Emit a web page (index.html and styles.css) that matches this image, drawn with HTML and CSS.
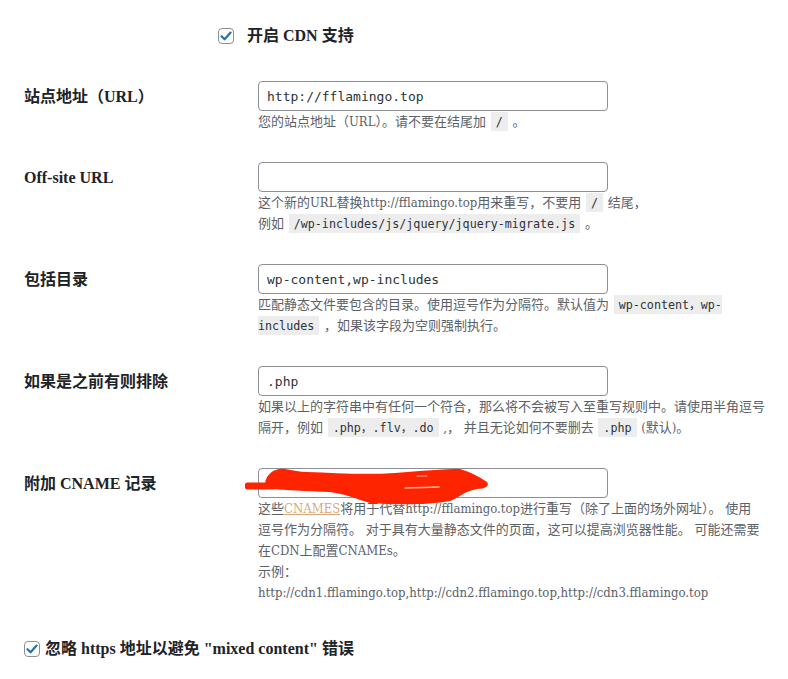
FILE: index.html
```html
<!DOCTYPE html>
<html lang="zh-CN">
<head>
    <meta charset="UTF-8">
    <meta name="viewport" content="width=device-width, initial-scale=1.0">
    <title>CDN 设置</title>
    <link rel="stylesheet" href="styles.css">
</head>
<body>
    <div class="wrap">
        <label class="option top-option">
            <span class="checkbox">
                <svg width="16" height="16" viewBox="0 0 16 16"><polyline points="3.5,8.2 6.6,11.3 12.6,4.6" fill="none" stroke="#2271b1" stroke-width="2.2" stroke-linecap="round" stroke-linejoin="round"/></svg>
            </span>
            开启 CDN 支持
        </label>

        <div class="form-table">
            <div class="row">
                <div class="th">站点地址（URL）</div>
                <div class="td">
                    <input type="text" class="text-input" value="http://fflamingo.top">
                    <p class="description">您的站点地址（URL）。请不要在结尾加 <code>/</code> 。</p>
                </div>
            </div>
            <div class="row">
                <div class="th">Off-site URL</div>
                <div class="td">
                    <input type="text" class="text-input" value="">
                    <p class="description">这个新的URL替换http://fflamingo.top用来重写，不要用 <code>/</code> 结尾，<br>例如 <code>/wp-includes/js/jquery/jquery-migrate.js</code> 。</p>
                </div>
            </div>
            <div class="row">
                <div class="th">包括目录</div>
                <div class="td">
                    <input type="text" class="text-input" value="wp-content,wp-includes">
                    <p class="description">匹配静态文件要包含的目录。使用逗号作为分隔符。默认值为 <code>wp-content，wp-includes</code> ，如果该字段为空则强制执行。</p>
                </div>
            </div>
            <div class="row">
                <div class="th">如果是之前有则排除</div>
                <div class="td">
                    <input type="text" class="text-input" value=".php">
                    <p class="description">如果以上的字符串中有任何一个符合，那么将不会被写入至重写规则中。请使用半角逗号<br>隔开，例如 <code>.php，.flv，.do</code> ,， 并且无论如何不要删去 <code>.php</code> (默认)。</p>
                </div>
            </div>
            <div class="row">
                <div class="th">附加 CNAME 记录</div>
                <div class="td">
                    <div class="field">
                        <input type="text" class="text-input" value="">
                        <svg class="redact" width="246" height="40" viewBox="0 0 246 40">
                            <path d="M3 19 L28 19" stroke="#ff2400" stroke-width="7" stroke-linecap="round"/>
                            <path d="M20 16 C22 6 30 1 40 2 C48 3 55 5 62 5 C90 6 120 8 150 6 C175 4 200 2 215 2 C225 5 235 10 242 15 C245 19 240 22 232 22 C220 24 215 30 205 34 C185 38 150 38 125 36 C112 32 100 27 85 25 C60 24 40 23 28 22 C22 21 20 19 20 16 Z" fill="#ff2400"/>
                            <path d="M160 21 L194 20" stroke="#ffb8a6" stroke-width="1.4" stroke-linecap="round"/>
                            <path d="M172 9 L182 9" stroke="#ffb8a6" stroke-width="1" stroke-linecap="round"/>
                        </svg>
                    </div>
                    <p class="description">这些<a href="#">CNAMES</a>将用于代替http://fflamingo.top进行重写（除了上面的场外网址）。 使用<br>逗号作为分隔符。 对于具有大量静态文件的页面，这可以提高浏览器性能。 可能还需要<br>在CDN上配置CNAMEs。<br>示例：<br>http://cdn1.fflamingo.top,http://cdn2.fflamingo.top,http://cdn3.fflamingo.top</p>
                </div>
            </div>
        </div>

        <label class="option bottom-option">
            <span class="checkbox">
                <svg width="16" height="16" viewBox="0 0 16 16"><polyline points="3.5,8.2 6.6,11.3 12.6,4.6" fill="none" stroke="#2271b1" stroke-width="2.2" stroke-linecap="round" stroke-linejoin="round"/></svg>
            </span>
            忽略 https 地址以避免 "mixed content" 错误
        </label>
    </div>
</body>
</html>
```

FILE: styles.css
```css
body {
    margin: 0;
    background: #fff;
    color: #1d2327;
    font-family: "Liberation Serif", "Noto Sans CJK SC", serif;
}
.wrap {
    padding-left: 24px;
}
.option {
    display: flex;
    align-items: center;
    font-size: 16px;
    font-weight: bold;
    line-height: 20px;
}
.top-option {
    margin-left: 194px;
    padding-top: 26px;
    margin-bottom: 20px;
    gap: 13px;
}
.bottom-option {
    margin-top: 21px;
    gap: 5px;
}
.checkbox {
    width: 16px;
    height: 16px;
    box-sizing: border-box;
    border: 1px solid #8c8f94;
    border-radius: 4px;
    background: #fff;
    display: flex;
    align-items: center;
    justify-content: center;
}
.checkbox svg {
    flex: none;
}
.form-table {
    display: flex;
    flex-direction: column;
}
.row {
    display: flex;
}
.th {
    width: 214px;
    padding: 21px 10px 19px 0;
    font-size: 16px;
    font-weight: bold;
    line-height: 1.3;
}
.td {
    width: 510px;
    padding: 15px 10px;
}
.field {
    position: relative;
}
.text-input {
    display: block;
    width: 350px;
    height: 30px;
    box-sizing: border-box;
    margin: 0;
    padding: 0 8px;
    border: 1px solid #8c8f94;
    border-radius: 4px;
    background: #fff;
    color: #2c3338;
    font-family: "DejaVu Sans Mono", "Noto Sans CJK SC", monospace;
    font-size: 13px;
}
.redact {
    position: absolute;
    left: -13px;
    top: -1px;
}
.description {
    margin: 0;
    font-family: "DejaVu Serif Condensed", "Liberation Serif", "Noto Sans CJK SC", serif;
    font-size: 13px;
    line-height: 21px;
    color: #5b6167;
}
.description a {
    color: #d9a77c;
}
code {
    background: #ededed;
    padding: 3px 5px 2px;
    margin: 0 1px;
    font-family: "DejaVu Sans Mono", "Noto Sans CJK SC", monospace;
    font-size: 11.7px;
    line-height: 1;
    color: #2c3338;
}
```
